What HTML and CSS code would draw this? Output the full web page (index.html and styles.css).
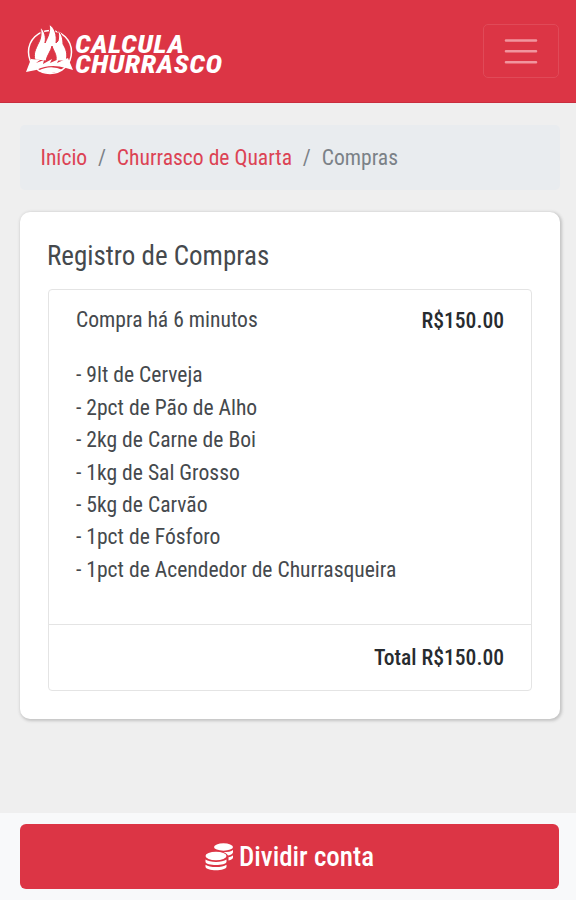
FILE: index.html
```html
<!DOCTYPE html>
<html lang="pt-BR">
<head>
<meta charset="utf-8">
<title>Calcula Churrasco</title>
<link rel="stylesheet" href="styles.css">
</head>
<body>
<header class="navbar">
  <a class="brand">
    <svg class="brand-mark" viewBox="0 0 48 54" aria-hidden="true">
      <circle cx="24" cy="29" r="21.500" fill="none" stroke="#fff" stroke-width="1.500"/>
      <path class="flame-edge" d="M9 37C7 30 10 26 12 21C15 16 16 10 14 4C19 8 20 14 19 20C22 14 25 8 23 1C29 5 31 12 30 20L32 18C33 14 33 10 31 7C36 10 37 16 37 21C40 26 42 31 40 38L30 38C31 31 28 29 26 23C25 28 21 32 20 38Z"/>
      <path fill="#fff" d="M0 49L5 36L14 37L10 40L18 37L17 41L26 36L24 40L33 36L31 40L42 35L47 47L40 45Q24 40 10 47Z"/>
      <path fill="#fff" d="M12 48Q24 41 37 47Q25 53 12 48Z"/>
    </svg>
    <span class="brand-name"><span>CALCULA</span><span>CHURRASCO</span></span>
  </a>
  <button class="toggler" aria-label="Menu"><svg viewBox="0 0 34 28"><path d="M2 3.500H32M2 14.300H32M2 25.200H32" stroke="#f1959e" stroke-width="2.600" stroke-linecap="round"/></svg></button>
</header>
<main class="content">
  <nav class="breadcrumb"><a>Início</a><i>/</i><a>Churrasco de Quarta</a><i>/</i><span>Compras</span></nav>
  <section class="card">
    <h1>Registro de Compras</h1>
    <div class="list">
      <div class="purchase">
        <div class="purchase-head"><span>Compra há 6 minutos</span><strong>R$150.00</strong></div>
        <ul><li>- 9lt de Cerveja</li><li>- 2pct de Pão de Alho</li><li>- 2kg de Carne de Boi</li><li>- 1kg de Sal Grosso</li><li>- 5kg de Carvão</li><li>- 1pct de Fósforo</li><li>- 1pct de Acendedor de Churrasqueira</li></ul>
      </div>
      <div class="total"><strong>Total R$150.00</strong></div>
    </div>
  </section>
</main>
<footer class="actions">
  <button class="split">
    <svg class="coins" viewBox="0 0 29 28" aria-hidden="true" fill="#fff">
      <ellipse cx="18.500" cy="4" rx="9.500" ry="3.700"/>
      <path d="M28 7v2.300c0 1.500-2 2.700-5 3.300-.8-1.600-2.600-2.700-4.800-3.300C22.600 9.200 26.400 8.500 28 7zM28 12.200v2.200c0 1.400-1.800 2.500-4.500 3.100v-3.200c1.900-.4 3.500-1.100 4.500-2.100z"/>
      <ellipse cx="11" cy="13" rx="10.500" ry="4.200"/>
      <path d="M.5 16.500c4.200 3.200 16.800 3.200 21 0v2.200c0 4.400-21 4.400-21 0zM.5 21.700c4.200 3.200 16.800 3.200 21 0v2.100c0 4.600-21 4.600-21 0z"/>
    </svg>
    <span>Dividir conta</span>
  </button>
</footer>
</body>
</html>
```
FILE: styles.css
```css
* { box-sizing: border-box; }
body {
  margin: 0;
  height: 900px;
  display: flex;
  flex-direction: column;
  background: #efefef;
  color: #45494d;
  font: 400 21.6px/32.4px "Roboto Condensed", Roboto, sans-serif;
  font-stretch: 75%;
}
.navbar {
  height: 103px;
  display: flex;
  justify-content: space-between;
  align-items: center;
  padding: 0 17px 0 26px;
  background: #dc3545;
  border-bottom: 1px solid #c92d3e;
}
.brand { display: flex; align-items: center; gap: 1px; color: #fff; }
.brand-mark { width: 48px; height: 54px; margin-top: -3px; }
.flame-edge { fill: #fff; stroke: #dc3545; stroke-width: 1; }
.brand-name { display: flex; flex-direction: column; font-weight: 800; font-style: italic; font-size: 25px; line-height: 20px; letter-spacing: .5px; padding-top: 7px; transform: scaleX(1.13); transform-origin: left; }
.toggler { width: 76px; height: 54px; padding: 0; background: none; border: 1.4px solid #e04a58; border-radius: 5px; display: flex; align-items: center; justify-content: center; }
.toggler svg { width: 34px; height: 28px; }
.content { flex: 1; padding: 22px 16px 0 20px; }
.breadcrumb { height: 65px; display: flex; align-items: center; gap: 10.8px; padding: 1px 20.5px 0; background: #e9ecef; border-radius: 5px; color: #7b8187; }
.breadcrumb a { color: #dc4354; }
.breadcrumb i { font-style: normal; }
.card { margin-top: 22px; height: 507px; padding: 28px; background: #fff; border-radius: 10px; box-shadow: 1px 1px 3px 1px #c4c4c4; }
h1 { margin: 0 0 0 -1px; height: 49px; font-size: 27px; line-height: 33px; font-weight: 400; }
.list { border: 1px solid #e4e4e4; border-radius: 4px; }
.purchase { height: 335px; padding: 14px 27px; border-bottom: 1px solid #e4e4e4; }
.purchase-head { display: flex; justify-content: space-between; margin-bottom: 23px; }
.purchase-head strong { padding-top: 1px; margin-bottom: -1px; }
strong { font-weight: 500; color: #272b2f; }
ul { list-style: none; margin: 0; padding: 0; }
.total { height: 65px; padding: 17px 27px 15px; text-align: right; }
.actions { height: 87px; padding: 11px 17px 11px 20px; background: #f8f9fa; }
.split { width: 100%; height: 65px; display: flex; align-items: center; justify-content: center; gap: 5px; padding: 2px 0 0; border: 0; border-radius: 6px; background: #dc3545; color: #fff; font: inherit; font-stretch: 75%; font-size: 27px; font-weight: 500; }
.coins { width: 29px; height: 28px; margin-top: -2px; }
```
